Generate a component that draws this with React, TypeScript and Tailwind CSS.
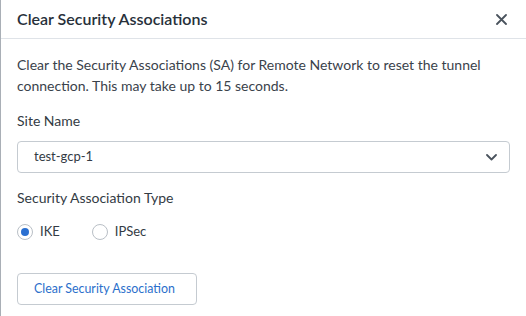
import React from "react";

export default function App() {
  return (
    <div
      className="w-[526px] h-[316px] bg-white border-l border-[#a9afb6] overflow-hidden text-[#333b44]"
      style={{ fontFamily: "Lato, 'Noto Sans', sans-serif" }}
    >
      <div className="h-[39px] flex items-center justify-between pl-[16px] pr-[18px] border-b border-[#dfe3e8]">
        <div className="text-[16px] font-semibold text-[#27303a]">Clear Security Associations</div>
        <svg width="11" height="11" viewBox="0 0 11 11" className="mr-[1px]">
          <path d="M1 1L10 10M10 1L1 10" stroke="#4a535d" strokeWidth="1.8" strokeLinecap="round" />
        </svg>
      </div>
      <div className="pl-[16px] pr-[15px] pt-[15px]">
        <p className="text-[14px] leading-[21px] text-[#3a424b]">
          Clear the Security Associations (SA) for Remote Network to reset the tunnel connection. This may take up to 15 seconds.
        </p>
        <div className="mt-[15px] text-[14px] leading-[20px]">Site Name</div>
        <div className="mt-[10px] h-[32px] w-[493px] rounded-[4px] border border-[#c5cbd1] flex items-center justify-between pl-[16px] pr-[12px]">
          <span className="text-[13px]">test-gcp-1</span>
          <svg width="11" height="7" viewBox="0 0 11 7">
            <path d="M1 1L5.5 5.5L10 1" stroke="#4a535d" strokeWidth="1.8" fill="none" strokeLinecap="round" strokeLinejoin="round" />
          </svg>
        </div>
        <div className="mt-[15px] text-[14px] leading-[20px]">Security Association Type</div>
        <div className="mt-[16px] flex items-center h-[16px]">
          <div className="flex items-center">
            <div className="w-[16px] h-[16px] rounded-full border border-[#b9bfc6] flex items-center justify-center">
              <div className="w-[8px] h-[8px] rounded-full bg-[#2a6fd1]" />
            </div>
            <span className="ml-[7px] text-[13px]">IKE</span>
          </div>
          <div className="flex items-center ml-[32px]">
            <div className="w-[16px] h-[16px] rounded-full border border-[#b9bfc6]" />
            <span className="ml-[7px] text-[13px]">IPSec</span>
          </div>
        </div>
        <button className="mt-[33px] h-[32px] w-[180px] rounded-[4px] border border-[#c5cbd1] bg-white text-[12.4px] text-[#2b6fcb] flex items-center justify-start pl-[16px]">
          Clear Security Association
        </button>
      </div>
    </div>
  );
}
